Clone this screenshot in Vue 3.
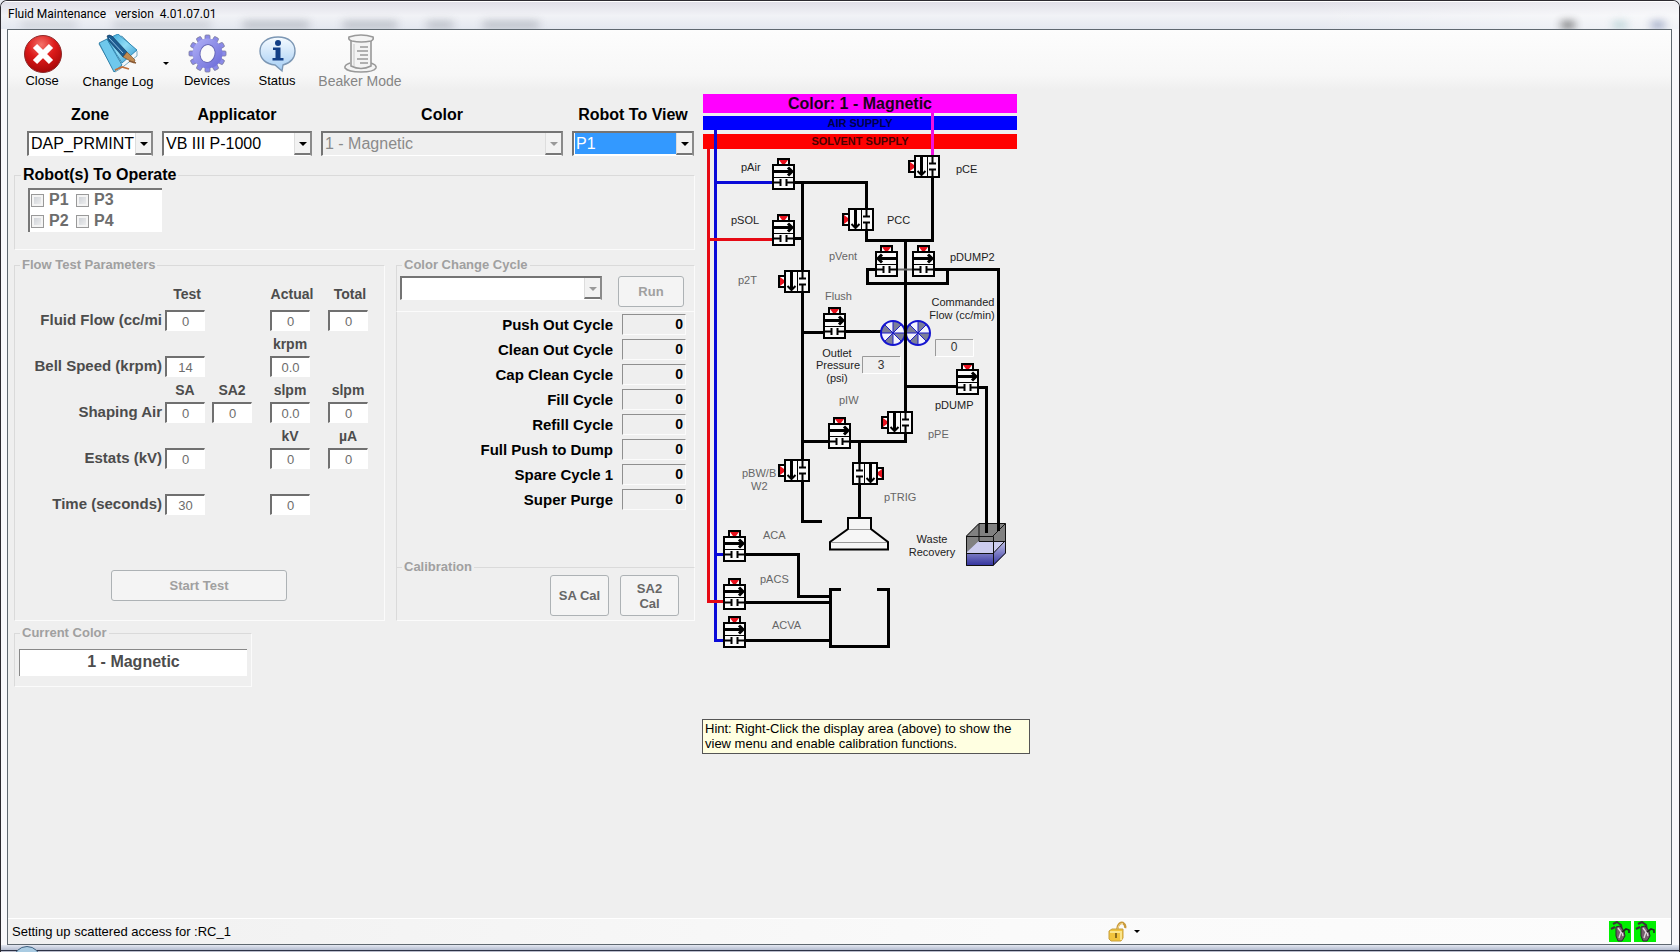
<script setup>
import { ref } from 'vue'

const zone = ref('DAP_PRMINT')
const applicator = ref('VB III P-1000')
const color = ref('1 - Magnetic')
const robot = ref('P1')
const cycle = ref('')

const robots = ['P1', 'P3', 'P2', 'P4']

const flowRows = [
  { label: 'Fluid Flow (cc/mi', heads: ['Test', '', 'Actual', 'Total'], values: ['0', null, '0', '0'] },
  { label: 'Bell Speed (krpm)', heads: ['', '', 'krpm', ''], values: ['14', null, '0.0', null] },
  { label: 'Shaping Air', heads: ['SA', 'SA2', 'slpm', 'slpm'], values: ['0', '0', '0.0', '0'] },
  { label: 'Estats (kV)', heads: ['', '', 'kV', 'µA'], values: ['0', null, '0', '0'] },
  { label: 'Time (seconds)', heads: ['', '', '', ''], values: ['30', null, '0', null] }
]

const cycles = [
  'Push Out Cycle',
  'Clean Out Cycle',
  'Cap Clean Cycle',
  'Fill Cycle',
  'Refill Cycle',
  'Full Push to Dump',
  'Spare Cycle 1',
  'Super Purge'
]

// Valves with the actuator on top, by top-left corner
const topValves = [
  [772, 158], [772, 214], [912, 245], [823, 307], [956, 363], [828, 417],
  [723, 530], [723, 578], [723, 616]
]
// Valves with the actuator at the left
const sideValves = [[908, 155], [842, 208], [778, 270], [881, 411], [778, 459]]

const labels = [
  { x: 741, y: 171, t: 'pAir', dark: true },
  { x: 731, y: 224, t: 'pSOL', dark: true },
  { x: 956, y: 173, t: 'pCE', dark: true },
  { x: 887, y: 224, t: 'PCC', dark: true },
  { x: 829, y: 260, t: 'pVent' },
  { x: 950, y: 261, t: 'pDUMP2', dark: true },
  { x: 738, y: 284, t: 'p2T' },
  { x: 825, y: 300, t: 'Flush' },
  { x: 935, y: 409, t: 'pDUMP', dark: true },
  { x: 839, y: 404, t: 'pIW' },
  { x: 928, y: 438, t: 'pPE' },
  { x: 742, y: 477, t: 'pBW/B' },
  { x: 751, y: 490, t: 'W2' },
  { x: 884, y: 501, t: 'pTRIG' },
  { x: 763, y: 539, t: 'ACA' },
  { x: 760, y: 583, t: 'pACS' },
  { x: 772, y: 629, t: 'ACVA' }
]
const centred = [
  { x: 963, y: 306, t: 'Commanded' },
  { x: 962, y: 319, t: 'Flow (cc/min)' },
  { x: 837, y: 357, t: 'Outlet' },
  { x: 838, y: 369, t: 'Pressure' },
  { x: 837, y: 382, t: '(psi)' },
  { x: 932, y: 543, t: 'Waste' },
  { x: 932, y: 556, t: 'Recovery' }
]
const teeth = Array.from({ length: 12 }, (_, i) => i * 30)
</script>

<template>
  <div class="window">
    <header class="titlebar">
      <span class="ghost g1"></span><span class="ghost g2"></span><span class="ghost g3"></span>
      <span class="ghost g4"></span><span class="ghost g8"></span><span class="ghost g9"></span>
      <span class="ghost g5"></span><span class="ghost g6"></span><span class="ghost g7"></span>
      <h1>Fluid Maintenance&nbsp;&nbsp; version&nbsp; 4.01.07.01</h1>
    </header>

    <div class="client">
      <nav class="toolbar">
        <button class="tool close">
          <svg width="40" height="40" viewBox="0 0 40 40">
            <defs>
              <radialGradient id="red" cx="45%" cy="25%" r="75%">
                <stop offset="0" stop-color="#f4726a" /><stop offset="0.5" stop-color="#dc1a1a" /><stop offset="1" stop-color="#a60808" />
              </radialGradient>
            </defs>
            <circle cx="21" cy="21" r="18.500" fill="url(#red)" stroke="#8d2a2a" />
            <path d="M13 13 L29 29 M29 13 L13 29" stroke="#fff" stroke-width="6" />
          </svg>
          <span>Close</span>
        </button>
        <button class="tool log">
          <svg width="40" height="40" viewBox="0 0 40 40">
            <defs>
              <linearGradient id="book" x1="0" y1="0" x2="1" y2="1">
                <stop offset="0" stop-color="#2f9fd4" /><stop offset="0.5" stop-color="#8fdcf6" /><stop offset="1" stop-color="#2a8fc8" />
              </linearGradient>
            </defs>
            <path d="M1 10 L17 38 L22 35 L39 22 L39 17 L24 2 Z" fill="#f2f7fa" stroke="#5a94b0" stroke-width=".8" />
            <path d="M1 9 L9 5 L24 31 L16 38 Z" fill="#6fc8ec" stroke="#1b6f9c" stroke-width=".8" />
            <path d="M9 5 L20 0 L39 16 L24 29 Z" fill="url(#book)" stroke="#1d7aa8" stroke-width=".8" />
            <path d="M9 2 Q11 0 14 2 L29 18 L25 23 L11 7 Z" fill="#1d5c90" stroke="#0d3152" stroke-width=".6" />
            <path d="M11 4 L25 19" stroke="#8fc0e4" />
            <path d="M25 23 L29 18 L37 26 L36 29 Z" fill="#c08a50" stroke="#6b4524" stroke-width=".6" />
            <path d="M31 27 L38 29" stroke="#8a5a34" stroke-width="1.4" />
            <path d="M17 36 L24 33 L31 35" stroke="#c0703c" stroke-width="1.8" fill="none" />
          </svg>
          <span>Change Log</span>
        </button>
        <button class="drop" aria-label="Change log menu"><i class="tri"></i></button>
        <button class="tool devices">
          <svg width="40" height="40" viewBox="0 0 40 40">
            <defs>
              <linearGradient id="gear" x1="0" y1="0" x2="1" y2="1">
                <stop offset="0" stop-color="#b2b2f8" /><stop offset="1" stop-color="#6868d6" />
              </linearGradient>
            </defs>
            <g fill="#8a8ae8" stroke="#7c7c9c" stroke-width=".8">
              <rect v-for="a in teeth" :key="a" x="18" y="2" width="5" height="9" rx="1" :transform="`rotate(${a} 20.5 20.5)`" />
            </g>
            <circle cx="20.500" cy="20.500" r="15" fill="url(#gear)" />
            <ellipse cx="20.500" cy="20.500" rx="7.500" ry="9" fill="#fafafa" stroke="#6868b8" transform="rotate(12 20.5 20.5)" />
          </svg>
          <span>Devices</span>
        </button>
        <button class="tool status">
          <svg width="40" height="40" viewBox="0 0 40 40">
            <defs>
              <linearGradient id="bubble" x1="0" y1="0" x2="0" y2="1">
                <stop offset="0" stop-color="#f6fbff" /><stop offset="1" stop-color="#a4cdf4" />
              </linearGradient>
            </defs>
            <path d="M21 4 C32 4 38 10 38 18 C38 25 33 30 26 32 L25 38 L18 32 C9 31 3 26 3 18 C3 10 10 4 21 4 Z" fill="url(#bubble)" stroke="#7c97b4" stroke-width="1.4" />
            <circle cx="21" cy="10" r="3" fill="#123f86" />
            <path d="M16 14.500 H23.500 V25 H26.500 V27.500 H15.500 V25 H18.500 V17 H16 Z" fill="#123f86" />
          </svg>
          <span>Status</span>
        </button>
        <button class="tool beaker" disabled>
          <svg width="40" height="40" viewBox="0 0 40 40" fill="#f4f4f4" stroke="#999" stroke-width="1.6">
            <path d="M10 29 Q4 31 5 34 Q8 38 21 38 Q34 38 36 34 Q37 31 31 29" />
            <path d="M11 6 V32 Q21 37 31 32 V6" />
            <path d="M9 3 Q21 -1 33 3 Q34 6 31 7 Q21 9 12 7 Q8 6 9 3 Z" />
            <path d="M20 13 H28 M17 17 H28 M20 21 H28 M17 25 H28 M20 29 H28" stroke-width="1.4" />
            <path d="M14 10 V32" stroke="#c8c8c8" stroke-width="1" />
          </svg>
          <span>Beaker Mode</span>
        </button>
      </nav>

      <main class="main">
        <section class="controls">
          <div class="pickers">
            <div class="picker zone">
              <label for="zone">Zone</label>
              <div class="combo"><select id="zone" v-model="zone"><option>DAP_PRMINT</option></select><i class="arrow"></i></div>
            </div>
            <div class="picker applicator">
              <label for="applicator">Applicator</label>
              <div class="combo"><select id="applicator" v-model="applicator"><option>VB III P-1000</option></select><i class="arrow"></i></div>
            </div>
            <div class="picker color">
              <label for="color">Color</label>
              <div class="combo off gray"><select id="color" v-model="color" disabled><option>1 - Magnetic</option></select><i class="arrow"></i></div>
            </div>
            <div class="picker robot">
              <label for="robot">Robot To View</label>
              <div class="combo selected"><select id="robot" v-model="robot"><option>P1</option><option>P2</option><option>P3</option><option>P4</option></select><i class="arrow"></i></div>
            </div>
          </div>

          <fieldset class="group robots">
            <legend class="strong">Robot(s) To Operate</legend>
            <div class="robot-list">
              <label v-for="r in robots" :key="r"><input type="checkbox" disabled />{{ r }}</label>
            </div>
          </fieldset>

          <div class="panels">
            <fieldset class="group flow">
              <legend>Flow Test Parameters</legend>
              <div class="flow-grid">
                <template v-for="(row, i) in flowRows" :key="row.label">
                  <span></span>
                  <span v-for="(h, j) in row.heads" :key="'h' + j" class="unit" :class="{ lead: i === 0 }">{{ h }}</span>
                  <label :for="'flow' + i" class="row-label">{{ row.label }}</label>
                  <template v-for="(v, j) in row.values" :key="'v' + j">
                    <input v-if="v !== null" :id="j === 0 ? 'flow' + i : undefined" class="box" :value="v" :aria-label="row.label + ' ' + row.heads[j]" disabled />
                    <span v-else></span>
                  </template>
                </template>
              </div>
              <button class="btn start" disabled>Start Test</button>
            </fieldset>

            <div class="cycle-column">
              <fieldset class="group change">
                <legend>Color Change Cycle</legend>
                <div class="change-row">
                  <div class="combo off"><select v-model="cycle" aria-label="Color change cycle" disabled><option value=""></option></select><i class="arrow"></i></div>
                  <button class="btn run" disabled>Run</button>
                </div>
              </fieldset>
              <div class="cycles">
                <div v-for="(c, i) in cycles" :key="c" class="cycle-row">
                  <label :for="'cycle' + i">{{ c }}</label>
                  <output :id="'cycle' + i">0</output>
                </div>
              </div>
              <fieldset class="group calibration">
                <legend>Calibration</legend>
                <div class="cal-row">
                  <button class="btn cal">SA Cal</button>
                  <button class="btn cal">SA2<br />Cal</button>
                </div>
              </fieldset>
            </div>
          </div>

          <fieldset class="group current">
            <legend>Current Color</legend>
            <output class="current-value">1 - Magnetic</output>
          </fieldset>
        </section>

        <section class="display">
          <svg class="diagram" width="330" height="570" viewBox="700 90 330 570">
            <defs>
              <g id="valve-top">
                <rect x="6" y="1" width="11" height="7" fill="#fff" stroke="#000" stroke-width="2" />
                <path d="M7 2 H16 L13 6 H10 Z" fill="#e8101c" />
                <rect x="1" y="7" width="21" height="24" fill="#fafafa" stroke="#000" stroke-width="2" />
                <path d="M2 19.500 H21" stroke="#000" />
                <path d="M2 13.500 H20 M16 9.500 L20 13.500 L16 17.500" fill="none" stroke="#000" stroke-width="3" />
                <path d="M0 24.500 H9 M14 24.500 H23 M8.500 21 V28 M14.500 21 V28" fill="none" stroke="#000" stroke-width="2" />
              </g>
              <g id="valve-side">
                <rect x="1" y="6" width="7" height="11" fill="#fff" stroke="#000" stroke-width="2" />
                <path d="M2 7 V16 L6 13 V10 Z" fill="#e8101c" />
                <rect x="7" y="1" width="24" height="21" fill="#fafafa" stroke="#000" stroke-width="2" />
                <path d="M19.500 2 V21" stroke="#000" />
                <path d="M13.500 2 V20" stroke="#000" stroke-width="3" />
                <path d="M9.500 16 L13.500 20 L17.500 16 M24.500 0 V8 M24.500 15 V23 M21 8.500 H28 M21 14.500 H28" fill="none" stroke="#000" stroke-width="2" />
              </g>
              <g id="pump">
                <circle r="12" fill="#f4f4fc" />
                <path d="M0 0 L-12 0 A12 12 0 0 1 -8.500 -8.500 Z M0 0 L0 -12 A12 12 0 0 1 8.500 -8.500 Z M0 0 L12 0 A12 12 0 0 1 8.500 8.500 Z M0 0 L0 12 A12 12 0 0 1 -8.500 8.500 Z" fill="#7c7f98" />
                <path d="M-12 0 H12 M0 -12 V12 M-8.500 -8.500 L8.500 8.500 M8.500 -8.500 L-8.500 8.500" stroke="#1a1ac8" />
                <circle r="12" fill="none" stroke="#1414d0" stroke-width="2" />
              </g>
              <linearGradient id="liquid" x1="0" y1="0" x2="0" y2="1">
                <stop offset="0" stop-color="#c4c4ea" /><stop offset="1" stop-color="#30309c" />
              </linearGradient>
            </defs>

            <rect x="703" y="94" width="314" height="19" fill="#f0f" />
            <rect x="703" y="116" width="314" height="14" fill="#00f" />
            <rect x="703" y="134" width="314" height="15" fill="#f00" />
            <text x="860" y="109" class="bar-title">Color: 1 - Magnetic</text>
            <text x="860" y="127" class="bar-sub air">AIR SUPPLY</text>
            <text x="860" y="145" class="bar-sub solvent">SOLVENT SUPPLY</text>

            <g fill="none" stroke-width="3">
              <path d="M715.500 130 V640.500 H724 M715.500 182.500 H773 M715.500 554.500 H724" stroke="#0a0ad8" />
              <path d="M708.500 149 V601.500 H724 M708.500 239.500 H773" stroke="#e60a14" />
              <path d="M932.500 113 V156" stroke="#f010e0" />
              <g stroke="#000">
                <path d="M794 182.500 H866.500 V209 M802.500 182 V521.500 H822 M794 238.500 H802" />
                <path d="M932.500 177 V240.500 H866.500 V230 M905.500 240 V441.500 H802" />
                <path d="M876 269.500 H867.500 V283.500 H947.500 V269.500 M934 269.500 H998.500 V531 M802 332.500 H824 M845 331.500 H882" />
                <path d="M905 386.500 H957 M978 387.500 H986.500 V532 M859.500 441 V518" />
                <path d="M745 554.500 H798.500 V596.500 H830 M745 602.500 H830 M745 640.500 H830" />
                <path d="M841 589.500 H830.500 V646.500 H888.500 V589.500 H877" />
              </g>
              <path d="M897 269.500 H913" stroke="#666" stroke-width="2" />
            </g>

            <use v-for="(v, i) in topValves" :key="'t' + i" href="#valve-top" :x="v[0]" :y="v[1]" />
            <use v-for="(v, i) in sideValves" :key="'s' + i" href="#valve-side" :x="v[0]" :y="v[1]" />
            <use href="#valve-top" transform="translate(898 245) scale(-1 1)" />
            <use href="#valve-side" transform="translate(884 462) scale(-1 1)" />

            <use href="#pump" x="893" y="333" />
            <use href="#pump" x="918" y="333" />
            <path d="M905.500 320 V347" stroke="#000" stroke-width="3" />

            <path d="M848 518 H871 V529 L888 542 V549.500 H830 V542 L848 529 Z" fill="#f6f6f6" stroke="#000" stroke-width="2" />
            <path d="M849 529.500 H870 M831 542.500 H887" stroke="#999" />

            <path d="M966 536 L979 523 H1006 V553 L993 566 H966 Z" fill="#808080" />
            <path d="M966 553 L979 541 H1006 V553 L993 566 H966 Z" fill="url(#liquid)" />
            <path d="M966 553 L979 541 H1006 L993 553 Z" fill="#ccccee" />
            <path d="M966.500 536 L979 523.500 H1005.500 V553 L993 565.500 H966.500 Z M966.500 536.500 H993.500 V565.500 M993 536 L1005 524 M966.500 553.500 H993 L1005 541 M979 524 V541.500 H1005" fill="none" stroke="#111" />
            <path d="M986.500 520 V533 M998.500 520 V531" stroke="#000" stroke-width="3" />

            <g class="readout">
              <path d="M862.500 373 V356.500 H900 M935.500 356 V339.500 H973" stroke="#999" fill="none" />
              <path d="M863 373.500 H900.500 V357 M936 356.500 H973.500 V340" stroke="#fff" fill="none" />
              <text x="881" y="369">3</text>
              <text x="954" y="351">0</text>
            </g>
            <text v-for="l in labels" :key="l.t" :x="l.x" :y="l.y" class="tag" :class="{ dark: l.dark }">{{ l.t }}</text>
            <text v-for="l in centred" :key="l.t" :x="l.x" :y="l.y" class="tag dark mid">{{ l.t }}</text>
          </svg>
          <p class="hint">Hint: Right-Click the display area (above) to show the view menu and enable calibration functions.</p>
        </section>
      </main>

      <footer class="statusbar">
        <span class="message">Setting up scattered access for :RC_1</span>
        <div class="status-right">
          <button class="lock" aria-label="Access">
            <svg width="20" height="21" viewBox="0 0 20 21">
              <path d="M9 10 L10 5 Q12 1 15 2 Q18 4 17 7" fill="none" stroke="#c99a3c" stroke-width="2.4" />
              <path d="M9.500 9 L10.500 5 Q12 2 15 2.500" fill="none" stroke="#f6dc94" />
              <path d="M1 10 L4 8 H15 V17 L13 20 H3 L1 18 Z" fill="#f1c43c" stroke="#c8a040" />
              <path d="M2 11 H13 V19" fill="none" stroke="#fbe58c" stroke-width="2" />
              <path d="M8 12 V17" stroke="#8a6a1c" stroke-width="2" />
            </svg>
            <i class="tri"></i>
          </button>
          <div class="robots-state">
            <svg v-for="n in 2" :key="n" width="22" height="21" viewBox="0 0 22 21">
              <rect width="22" height="21" fill="#00f000" />
              <path d="M4 3 L8 1 L12 4 L13 9 L11 12 M2 8 L6 6" fill="none" stroke="#3a3038" stroke-width="2" />
              <path d="M7 6 L11 5 L15 10 L16 15 L13 20 H9 L7 15 Z" fill="#75606c" stroke="#2c2430" />
              <path d="M9 7 L12 11 L10 17 M13 11 L14 15" stroke="#e0d4dc" stroke-width="1.4" fill="none" />
              <path d="M13 11 L17 8 L20 9 V12" stroke="#222" fill="none" stroke-width="1.6" />
            </svg>
          </div>
        </div>
      </footer>
    </div>
    <div class="frame-bottom"><span class="orb"></span></div>
  </div>
</template>

<style>
body {
  margin: 0;
  background: #e8eaf0;
}
</style>

<style scoped>
.window {
  box-sizing: border-box;
  min-height: 100vh;
  display: flex;
  flex-direction: column;
  position: relative;
  overflow: hidden;
  border: 1px solid #2c2a30;
  border-bottom: 0;
  border-radius: 7px 7px 0 0;
  background: #f8f8fb;
  font-family: "Liberation Sans", Arial, sans-serif;
  color: #000;
}
.titlebar {
  position: relative;
  height: 28px;
  overflow: hidden;
  border-top: 1px solid #fff;
  box-sizing: border-box;
  background:
    linear-gradient(90deg, transparent 0 78%, rgba(255, 255, 255, .5) 100%),
    linear-gradient(#e0dfe8, #f1f2f6 50%, #e4e8f0);
}
.titlebar h1 {
  position: relative;
  margin: 0;
  padding: 4px 0 0 7px;
  font: 400 12px/17px Roboto, "Open Sans", sans-serif;
}
.ghost {
  position: absolute;
  top: 20px;
  height: 6px;
  background: #9ea3ad;
  filter: blur(4px);
  opacity: .8;
}
.g1 { left: 20px; width: 56px; opacity: .4; }
.g2 { left: 112px; width: 98px; opacity: .5; }
.g3 { left: 242px; width: 66px; }
.g4 { left: 342px; width: 54px; }
.g8 { left: 426px; width: 26px; }
.g9 { left: 482px; width: 56px; }
.g5 { right: 104px; width: 14px; background: #333; }
.g6 { right: 52px; width: 14px; background: #9fc4c8; }
.g7 { right: 14px; width: 14px; background: #6f7ea8; }
.client {
  flex: 1;
  display: flex;
  flex-direction: column;
  margin: 0 7px 0 6px;
  border: 1px solid #5f6870;
  background: #efefef;
}
.toolbar {
  display: flex;
  height: 60px;
  padding-left: 12px;
  background: linear-gradient(#fdfdfd, #f7f7f7 75%, #efefef);
}
button {
  font-family: inherit;
  padding: 0;
}
.tool, .drop, .lock {
  border: 0;
  background: none;
  color: #000;
}
.tool {
  display: flex;
  flex-direction: column;
  align-items: center;
  padding-top: 3px;
  font-size: 13px;
  line-height: 15px;
  white-space: nowrap;
}
.log, .beaker { padding-top: 4px; }
.close { width: 44px; }
.log { width: 74px; margin-left: 17px; }
.drop { width: 12px; height: 60px; margin: 0 10px 0 5px; }
.devices { width: 50px; }
.status { width: 44px; margin-left: 23px; }
.beaker { width: 88px; margin-left: 17px; font-size: 14px; color: #858585; }
.tri {
  display: inline-block;
  border: 3px solid transparent;
  border-top-color: #000;
  border-bottom: 0;
}
.main {
  flex: 1;
  display: flex;
  align-items: flex-start;
  gap: 7px;
  padding-left: 6px;
}
.controls {
  width: 681px;
  flex: none;
  padding-top: 15px;
}
.pickers {
  display: flex;
  gap: 9px;
  padding: 0 1px 0 13px;
}
.picker {
  display: flex;
  flex-direction: column;
  gap: 6px;
}
.picker > label {
  font: 700 16px/20px "Liberation Sans", Arial, sans-serif;
  text-align: center;
}
.zone { width: 126px; }
.applicator { width: 150px; }
.color { width: 242px; }
.robot { width: 122px; }
.combo {
  box-sizing: border-box;
  display: flex;
  height: 25px;
  padding: 0 0 0 1px;
  border: 2px solid #747474;
  border-right-color: #8a8a8a;
  border-bottom: 1px solid #fff;
  background: #fff;
}
.combo select {
  flex: 1;
  min-width: 0;
  appearance: none;
  border: 0;
  margin: 0;
  padding: 0 0 0 1px;
  background: none;
  font: 16px/20px "Liberation Sans", Arial, sans-serif;
  color: #000;
  opacity: 1;
  outline: 0;
}
.combo .arrow {
  box-sizing: border-box;
  width: 16px;
  flex: none;
  position: relative;
  background: #f2f2f2;
  border-left: 1px solid #ddd;
  border-bottom: 2px solid #777;
}
.combo .arrow::after {
  content: "";
  position: absolute;
  left: 4px;
  top: 9px;
  border: 4px solid transparent;
  border-top-color: #000;
  border-bottom: 0;
}
.combo.off .arrow::after { border-top-color: #999; }
.combo.gray { background: #efefef; }
.combo.off select { color: #8a8a8a; }
.combo.selected select {
  background: #39f;
  color: #fff;
  margin-bottom: 1px;
}
.group {
  box-sizing: border-box;
  min-width: 0;
  margin: 0;
  padding: 0;
  border: 1px solid #dadada;
  border-right-color: #fbfbfb;
  border-bottom-color: #fbfbfb;
  outline: 0;
}
.group legend {
  margin-left: 5px;
  padding: 0 2px;
  font-size: 13px;
  font-weight: 700;
  line-height: 16px;
  color: #a0a0a0;
}
.group legend.strong {
  margin-left: 6px;
  font-size: 16px;
  line-height: 20px;
  color: #000;
}
.robots { height: 85px; margin-top: 9px; }
.robot-list {
  box-sizing: border-box;
  display: grid;
  grid-template-columns: 45px 45px;
  grid-auto-rows: 21px;
  width: 134px;
  height: 44px;
  margin: 3px 0 0 13px;
  padding-left: 1px;
  border-top: 2px solid #777;
  border-left: 2px solid #777;
  background: #fff;
}
.robot-list label {
  display: flex;
  align-items: center;
  gap: 5px;
  padding-bottom: 2px;
  font-size: 16px;
  font-weight: 700;
  line-height: 19px;
  color: #6d6d6d;
}
.robot-list input {
  appearance: none;
  box-sizing: border-box;
  width: 13px;
  height: 13px;
  margin: 2px 0 0;
  border: 1px solid #999;
  background: linear-gradient(135deg, #c8ccd2, #f4f4f4);
  box-shadow: inset 0 0 0 2px #f4f4f4;
}
.panels {
  display: flex;
  gap: 11px;
  margin-top: 7px;
}
.flow { flex: 1; height: 364px; }
.flow-grid {
  display: grid;
  grid-template-columns: minmax(0, 1fr) 43px 47px 58px 58px;
  grid-template-rows: 26px 21px repeat(4, 25px 21px);
  justify-items: end;
  padding: 11px 16px 0 0;
}
.unit {
  width: 40px;
  display: flex;
  justify-content: center;
  align-items: center;
  font-size: 14px;
  font-weight: 700;
  color: #4c4c4c;
}
.unit.lead { height: 20px; padding-left: 4px; box-sizing: border-box; }
.row-label {
  font-size: 15px;
  font-weight: 700;
  line-height: 20px;
  white-space: nowrap;
  color: #4c4c4c;
}
.box {
  box-sizing: border-box;
  width: 40px;
  height: 21px;
  padding: 0;
  border: 2px solid #707070;
  border-right: 1px solid #fff;
  border-bottom: 1px solid #fff;
  border-radius: 0;
  background: #fff;
  font: 13px/18px "Liberation Sans", Arial, sans-serif;
  color: #6d6d6d;
  text-align: center;
}
.btn {
  box-sizing: border-box;
  border: 1px solid #adb2b5;
  border-radius: 3px;
  background: #f4f4f4;
  font-size: 13px;
  font-weight: 700;
  line-height: 15px;
  color: #a0a0a0;
}
.start {
  display: block;
  width: 176px;
  height: 31px;
  margin: 55px 0 0 96px;
}
.cycle-column {
  width: 299px;
  display: flex;
  flex-direction: column;
}
.change { height: 55px; }
.change-row {
  display: flex;
  align-items: flex-start;
  justify-content: space-between;
  padding: 3px 10px 0 3px;
}
.change-row .combo { width: 202px; height: 24px; }
.run { width: 66px; height: 31px; }
.cycles {
  box-sizing: border-box;
  height: 256px;
  display: flex;
  flex-direction: column;
  gap: 4px;
  padding: 2px 8px 0 0;
  border-left: 1px solid #dadada;
  border-right: 1px solid #fbfbfb;
}
.cycle-row {
  display: flex;
  justify-content: flex-end;
  gap: 9px;
  font-size: 15px;
  font-weight: 700;
  line-height: 21px;
}
.cycle-row output {
  box-sizing: border-box;
  width: 64px;
  height: 21px;
  padding-right: 2px;
  border: 1px solid #8f8f8f;
  border-right-color: #fbfbfb;
  border-bottom-color: #fbfbfb;
  font-size: 14px;
  line-height: 18px;
  text-align: right;
}
.calibration { height: 62px; margin-top: -9px; }
.cal-row {
  display: flex;
  justify-content: flex-end;
  gap: 11px;
  padding-right: 15px;
}
.cal {
  width: 59px;
  height: 41px;
  color: #666;
}
.current {
  width: 238px;
  height: 62px;
  margin-top: 4px;
}
.current-value {
  box-sizing: border-box;
  display: block;
  height: 27px;
  margin: 8px 4px 0;
  border-top: 1px solid #888;
  border-left: 1px solid #888;
  background: #fff;
  font-size: 16px;
  font-weight: 700;
  line-height: 24px;
  text-align: center;
  color: #4c4c4c;
}
.display {
  display: flex;
  flex-direction: column;
  align-items: flex-start;
}
.diagram {
  display: block;
  margin-left: -2px;
}
.bar-title { font-size: 16px; font-weight: 700; text-anchor: middle; fill: #1c001c; }
.bar-sub { font-size: 11px; font-weight: 700; text-anchor: middle; }
.air { fill: #000048; }
.solvent { fill: #480000; }
.tag { font-size: 11px; fill: #666; }
.tag.dark { fill: #222; }
.mid { text-anchor: middle; }
.readout text { font-size: 12px; text-anchor: middle; fill: #333; }
.hint {
  box-sizing: border-box;
  width: 328px;
  margin: 59px 0 0;
  padding: 1px 2px 2px;
  border: 1px solid #555;
  background: #ffffe1;
  font-size: 13px;
  line-height: 15px;
}
.statusbar {
  display: flex;
  height: 25px;
  background: linear-gradient(90deg, #f0f0f0, #fafafa 60%, #fcfcfc);
  border-top: 1px solid #fff;
}
.message {
  flex: 2;
  padding-left: 4px;
  font-size: 13px;
  line-height: 25px;
}
.status-right {
  flex: 1;
  display: flex;
  justify-content: space-between;
  align-items: center;
  padding-right: 15px;
}
.lock {
  display: flex;
  align-items: center;
  gap: 6px;
}
.robots-state { display: flex; gap: 3px; }
.robots-state svg, .lock svg { display: block; }
.frame-bottom {
  position: relative;
  height: 7px;
  overflow: hidden;
  background: linear-gradient(#e4e8f2, #b4bccf 5px, #2b3145 5px, #2b3145 6px, #b9bccb 6px);
}
.orb {
  position: absolute;
  left: 12px;
  top: 1px;
  width: 28px;
  height: 28px;
  border-radius: 50%;
  border: 1px solid #40607e;
  background: #a9cbe2;
  box-sizing: border-box;
}
</style>
